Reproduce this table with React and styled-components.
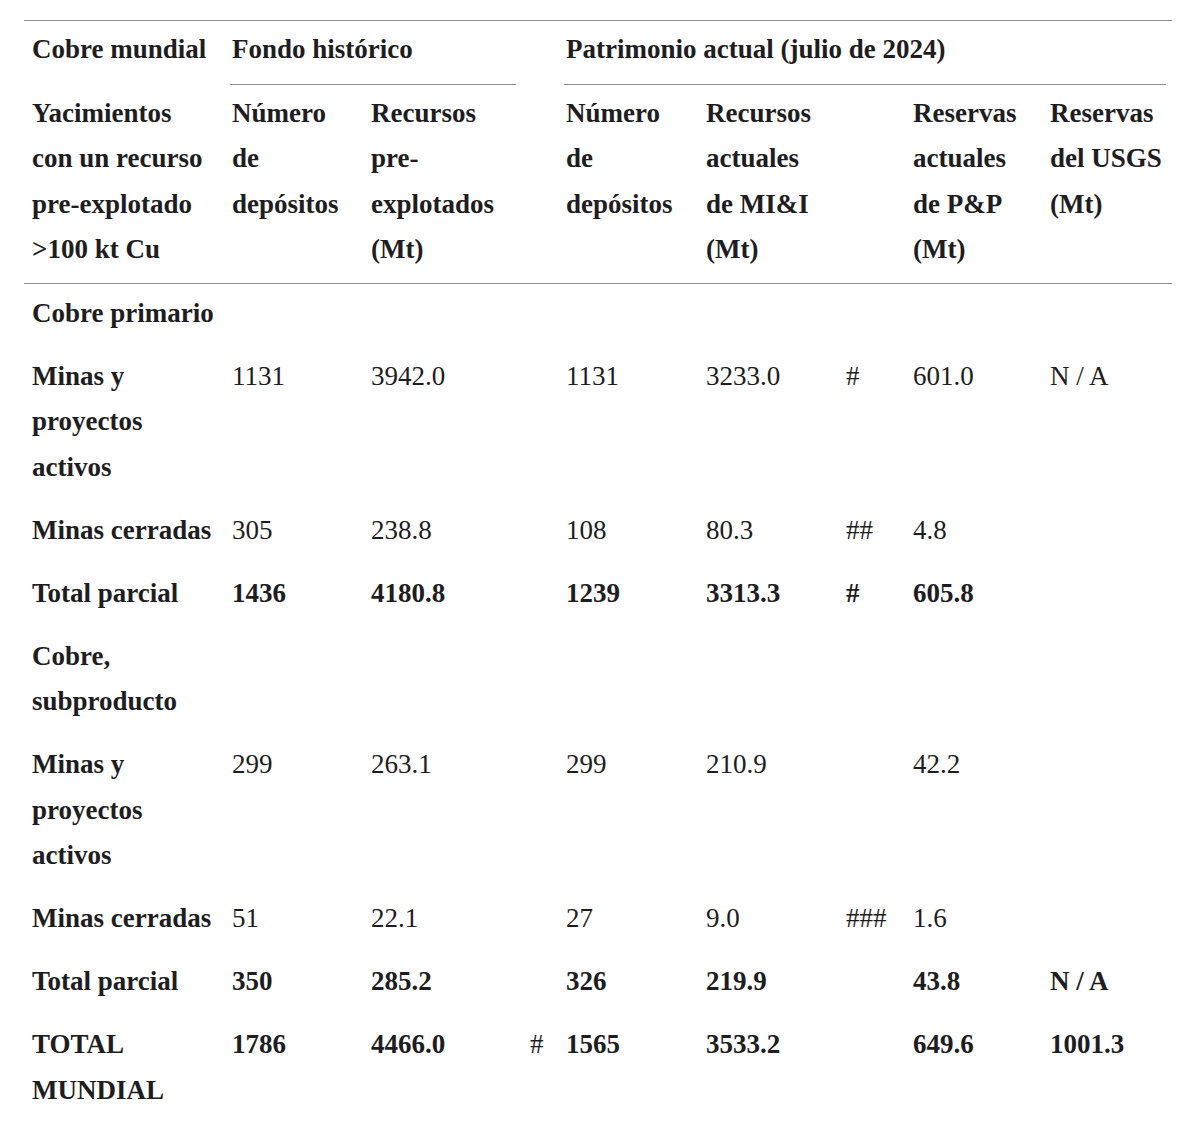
import React from "react";
import styled, { createGlobalStyle } from "styled-components";

const GlobalStyle = createGlobalStyle`
  body {
    margin: 0;
    background: #ffffff;
    font-family: "Liberation Serif", "Times New Roman", serif;
    color: #1d1d22;
  }
`;

const Wrapper = styled.div`
  padding: 20px 5px 0 24px;
`;

const Table = styled.table`
  width: 1148px;
  table-layout: fixed;
  border-collapse: collapse;
  font-size: 27px;
  line-height: 45.5px;
  color: #1d1d22;
`;

const HeadRow = styled.tr`
  border-top: ${(p) => (p.$top ? "1px solid #8f8f8f" : "none")};
  border-bottom: ${(p) => (p.$bottom ? "1px solid #8f8f8f" : "none")};
`;

const Th = styled.th`
  text-align: left;
  vertical-align: top;
  font-weight: 700;
  white-space: nowrap;
  padding: ${(p) =>
    p.$group ? "0 6px" : p.$tight ? "5.5px 8px 10.5px" : "6.25px 8px 11.25px"};
`;

// underline that spans a column group, inset from the cell edges
const GroupLabel = styled.div`
  padding: 6.25px 2px 11.25px;
  border-bottom: 1px solid #8f8f8f;
`;

const Row = styled.tr``;

const Td = styled.td`
  text-align: left;
  vertical-align: top;
  white-space: nowrap;
  padding: 6.5px 8px 11px;
  font-weight: ${(p) => (p.$bold ? 700 : 400)};
`;

const widths = [200, 139, 159, 36, 140, 140, 67, 137, 130];

const subHeads = [
  ["Yacimientos", "con un recurso", "pre-explotado", ">100 kt Cu"],
  ["Número", "de", "depósitos"],
  ["Recursos", "pre-", "explotados", "(Mt)"],
  [],
  ["Número", "de", "depósitos"],
  ["Recursos", "actuales", "de MI&I", "(Mt)"],
  [],
  ["Reservas", "actuales", "de P&P", "(Mt)"],
  ["Reservas", "del USGS", "(Mt)"],
];

// each row: label lines, then the eight value cells; bold = whole row bold
const rows = [
  { label: ["Cobre primario"], cells: [] },
  {
    label: ["Minas y", "proyectos", "activos"],
    cells: ["1131", "3942.0", "", "1131", "3233.0", "#", "601.0", "N / A"],
  },
  {
    label: ["Minas cerradas"],
    cells: ["305", "238.8", "", "108", "80.3", "##", "4.8", ""],
  },
  {
    label: ["Total parcial"],
    bold: true,
    cells: ["1436", "4180.8", "", "1239", "3313.3", "#", "605.8", ""],
  },
  { label: ["Cobre,", "subproducto"], cells: [] },
  {
    label: ["Minas y", "proyectos", "activos"],
    cells: ["299", "263.1", "", "299", "210.9", "", "42.2", ""],
  },
  {
    label: ["Minas cerradas"],
    cells: ["51", "22.1", "", "27", "9.0", "###", "1.6", ""],
  },
  {
    label: ["Total parcial"],
    bold: true,
    cells: ["350", "285.2", "", "326", "219.9", "", "43.8", "N / A"],
  },
  {
    label: ["TOTAL", "MUNDIAL"],
    bold: true,
    plain: [2],
    cells: ["1786", "4466.0", "#", "1565", "3533.2", "", "649.6", "1001.3"],
  },
];

function Lines({ lines }) {
  return lines.map((l, i) => (
    <React.Fragment key={i}>
      {i > 0 && <br />}
      {l}
    </React.Fragment>
  ));
}

export default function App() {
  return (
    <Wrapper>
      <GlobalStyle />
      <Table>
        <colgroup>
          {widths.map((w, i) => (
            <col key={i} style={{ width: w }} />
          ))}
        </colgroup>
        <thead>
          <HeadRow $top>
            <Th>Cobre mundial</Th>
            <Th colSpan={2} $group>
              <GroupLabel>Fondo histórico</GroupLabel>
            </Th>
            <Th />
            <Th colSpan={5} $group>
              <GroupLabel>Patrimonio actual (julio de 2024)</GroupLabel>
            </Th>
          </HeadRow>
          <HeadRow $bottom>
            {subHeads.map((h, i) => (
              <Th key={i} $tight>
                <Lines lines={h} />
              </Th>
            ))}
          </HeadRow>
        </thead>
        <tbody>
          {rows.map((r, i) => (
            <Row key={i}>
              <Td $bold>
                <Lines lines={r.label} />
              </Td>
              {Array.from({ length: 8 }).map((_, j) => (
                <Td key={j} $bold={r.bold && !(r.plain || []).includes(j)}>
                  {r.cells[j] || ""}
                </Td>
              ))}
            </Row>
          ))}
        </tbody>
      </Table>
    </Wrapper>
  );
}
